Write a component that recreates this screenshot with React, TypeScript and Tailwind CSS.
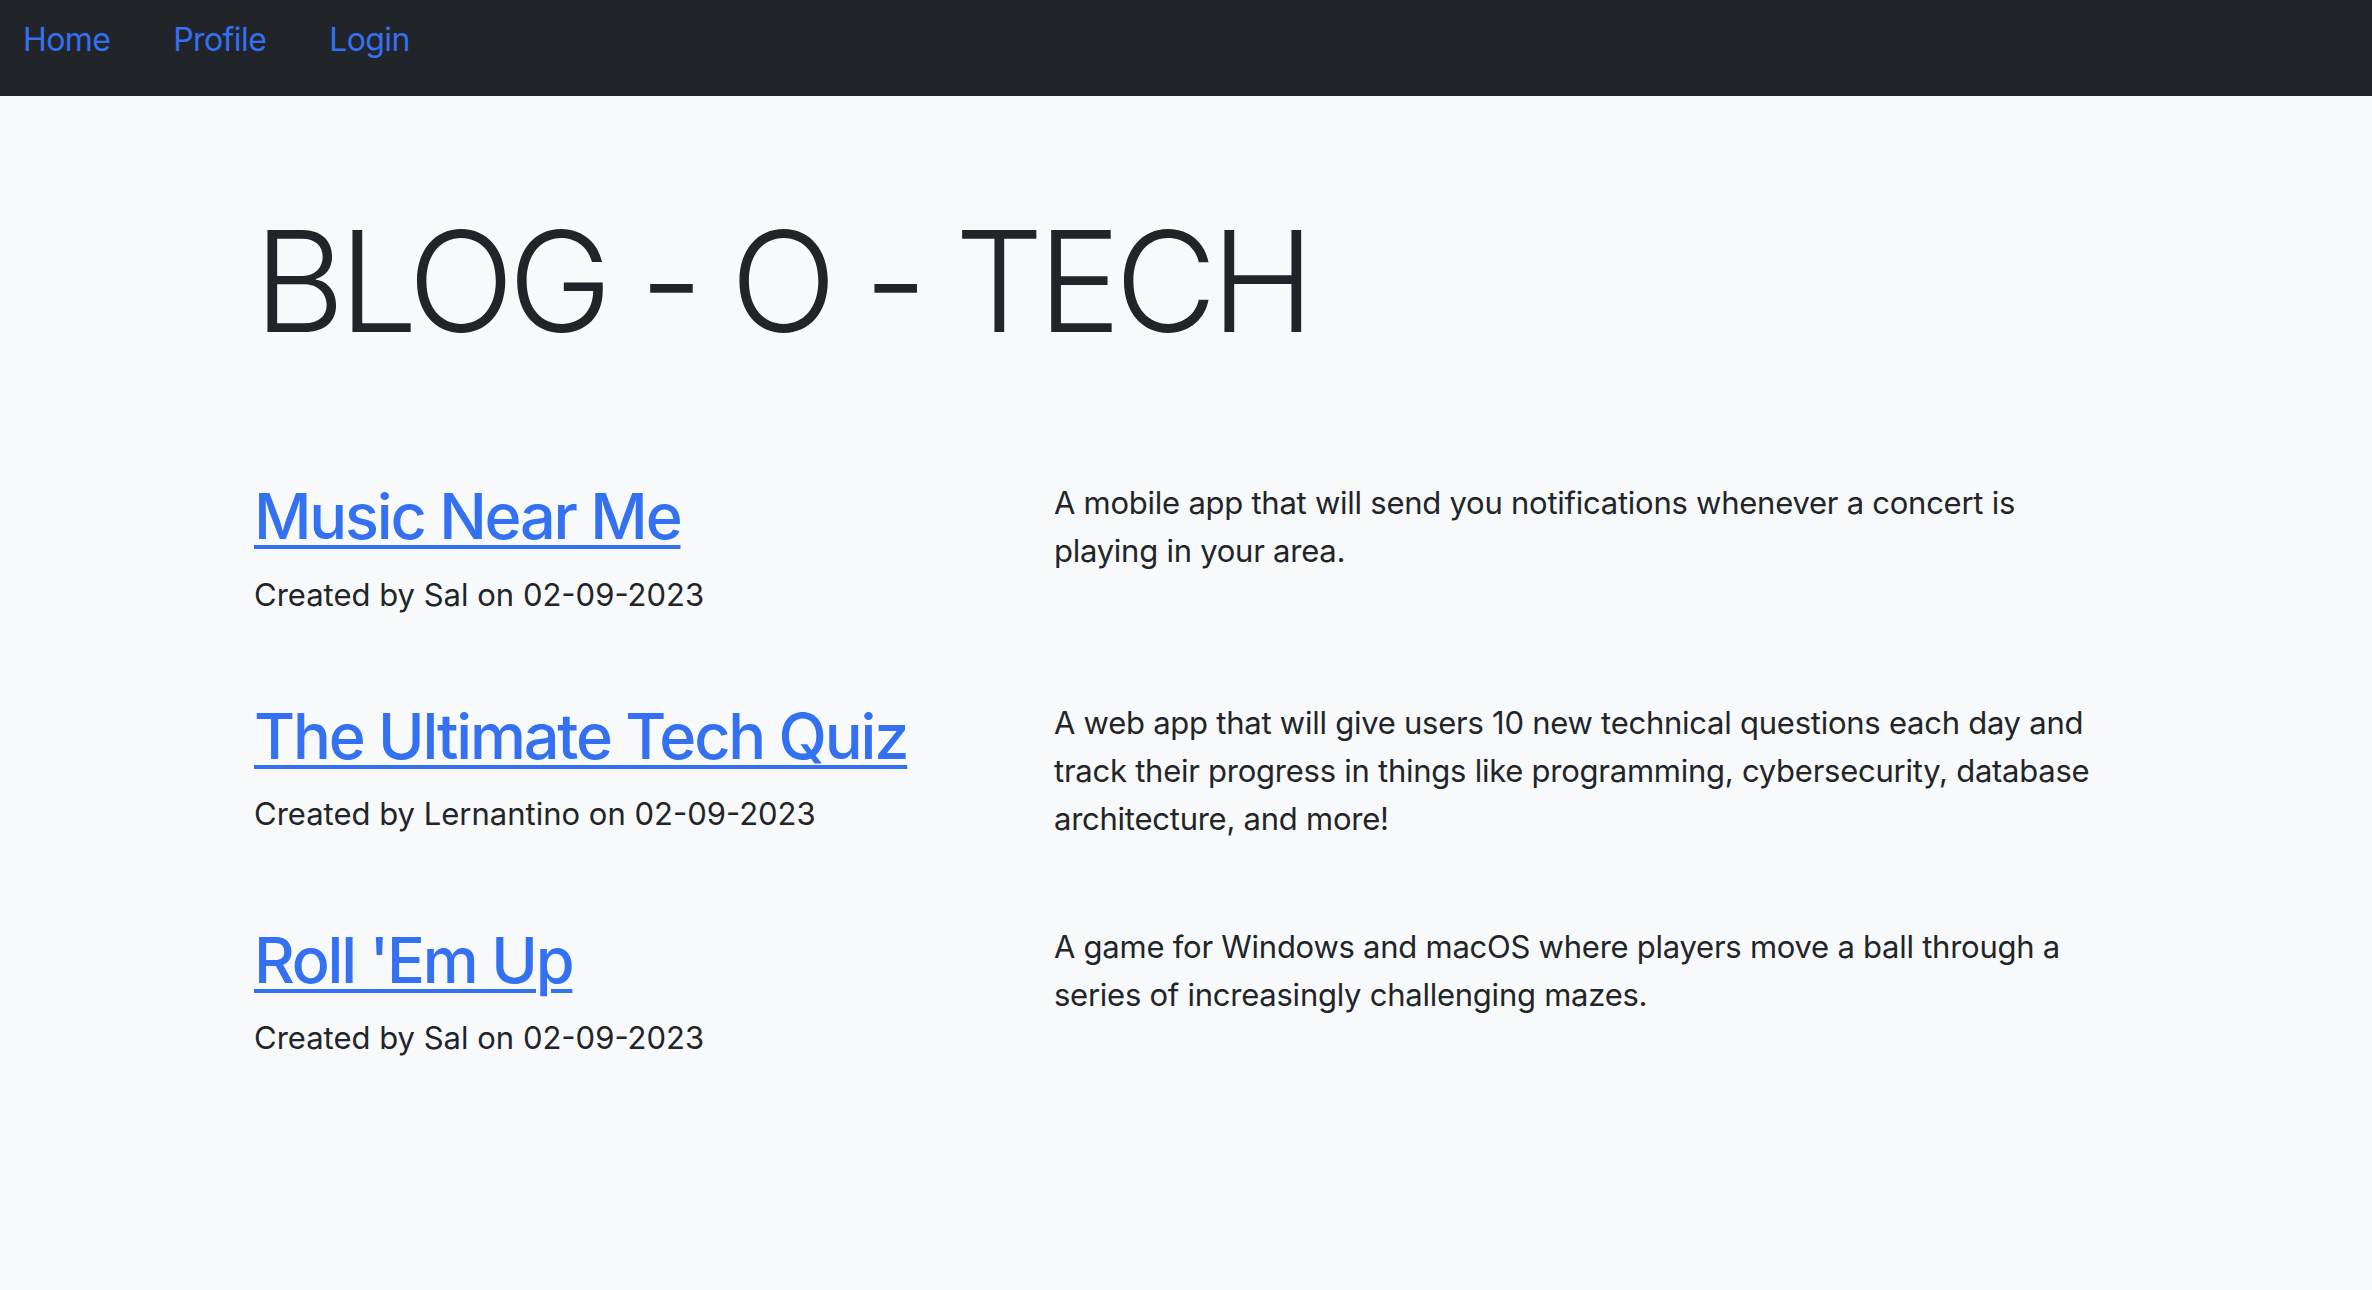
import React from "react";

type Project = {
  title: string;
  author: string;
  date: string;
  description: string;
};

const projects: Project[] = [
  {
    title: "Music Near Me",
    author: "Sal",
    date: "02-09-2023",
    description: "A mobile app that will send you notifications whenever a concert is playing in your area.",
  },
  {
    title: "The Ultimate Tech Quiz",
    author: "Lernantino",
    date: "02-09-2023",
    description:
      "A web app that will give users 10 new technical questions each day and track their progress in things like programming, cybersecurity, database architecture, and more!",
  },
  {
    title: "Roll 'Em Up",
    author: "Sal",
    date: "02-09-2023",
    description: "A game for Windows and macOS where players move a ball through a series of increasingly challenging mazes.",
  },
];

const navLinks = ["Home", "Profile", "Login"];

const ProjectRow = ({ title, author, date, description }: Project) => (
  <div className="grid grid-cols-[752px_1060px] gap-x-12 mb-12">
    <div>
      <h2 className="text-[63px] leading-[1.2] mb-4 font-medium tracking-[-2.2px]">
        <a href="#" className="text-[#3371f2] underline decoration-[4px] underline-offset-[6px]">
          {title}
        </a>
      </h2>
      <p className="text-[31px] leading-[48px] mb-8">
        Created by {author} on {date}
      </p>
    </div>
    <p className="text-[31px] leading-[48px] mb-8 tracking-[-0.25px]">{description}</p>
  </div>
);

export default function App() {
  return (
    <div className="min-h-[1290px] bg-[#f8f9fa] text-[#212529] font-['Inter','Liberation_Sans',sans-serif]">
      <nav className="h-[96px] bg-[#212529] flex items-start pt-4 pl-[23px] gap-[63px]">
        {navLinks.map((link) => (
          <a key={link} href="#" className="text-[32px] leading-[48px] tracking-[-0.6px] text-[#3371f2]">
            {link}
          </a>
        ))}
      </nav>
      <main className="w-[1920px] mx-auto pl-[28px] pr-5 pt-[101px]">
        <h1 className="text-[140px] leading-[1.2] font-light tracking-[-6px] mb-[114px]">BLOG - O - TECH</h1>
        {projects.map((project) => (
          <ProjectRow key={project.title} {...project} />
        ))}
      </main>
    </div>
  );
}
